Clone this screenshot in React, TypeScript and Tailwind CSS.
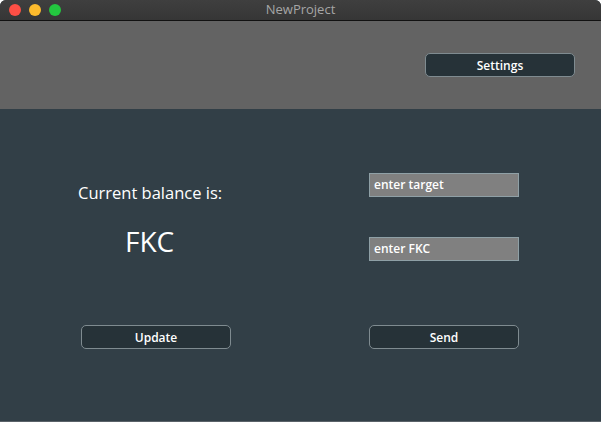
import React from "react";

export default function App() {
  const font = { fontFamily: '"Open Sans", "Liberation Sans", sans-serif' };
  return (
    <div className="w-[601px] h-[422px] bg-white" style={font}>
      <div className="w-[601px] h-[422px] flex flex-col rounded-t-[6px] overflow-hidden bg-[#323f47] border-b border-[#5a6268]">
        {/* Title bar */}
        <div className="relative h-[21px] shrink-0 bg-gradient-to-b from-[#3f3f3f] to-[#363636] border-b border-[#111111] flex items-center">
          <div className="flex items-center gap-[8px] pl-[9px]">
            <div className="w-[12px] h-[12px] rounded-full bg-[#fd4f45]" />
            <div className="w-[12px] h-[12px] rounded-full bg-[#fdbb2d]" />
            <div className="w-[12px] h-[12px] rounded-full bg-[#23c63f]" />
          </div>
          <div className="absolute inset-0 flex items-center justify-center text-[13px] text-[#a6a6a6] leading-none pb-[1px]">
            NewProject
          </div>
        </div>
        {/* Header */}
        <div className="h-[88px] shrink-0 bg-[#636363] flex justify-end items-start pt-[32px] pr-[26px]">
          <button className="w-[150px] h-[24px] rounded-[5px] bg-[#263238] border border-[#7f8b90] text-white text-[12px] font-semibold leading-none pt-[1px]">
            Settings
          </button>
        </div>
        {/* Content */}
        <div className="flex-1 flex">
          <div className="w-[369px] flex flex-col">
            <div className="mt-[74px] ml-[78px] text-[16.5px] leading-[20px] text-white whitespace-nowrap">
              Current balance is:
            </div>
            <div className="mt-[22px] ml-[125px] text-[28px] leading-[32px] text-white">
              FKC
            </div>
            <button className="mt-[68px] ml-[81px] w-[150px] h-[24px] rounded-[5px] bg-[#263238] border border-[#7f8b90] text-white text-[12px] font-semibold leading-none pt-[1px]">
              Update
            </button>
          </div>
          <div className="w-[150px] flex flex-col">
            <div className="mt-[64px] h-[24px] bg-[#808080] border border-[#8fa0a6] flex items-center px-[4px] text-white text-[12px] font-semibold">
              enter target
            </div>
            <div className="mt-[40px] h-[24px] bg-[#808080] border border-[#8fa0a6] flex items-center px-[4px] text-white text-[12px] font-semibold">
              enter FKC
            </div>
            <button className="mt-[64px] w-[150px] h-[24px] rounded-[5px] bg-[#263238] border border-[#7f8b90] text-white text-[12px] font-semibold leading-none pt-[1px]">
              Send
            </button>
          </div>
        </div>
      </div>
    </div>
  );
}
